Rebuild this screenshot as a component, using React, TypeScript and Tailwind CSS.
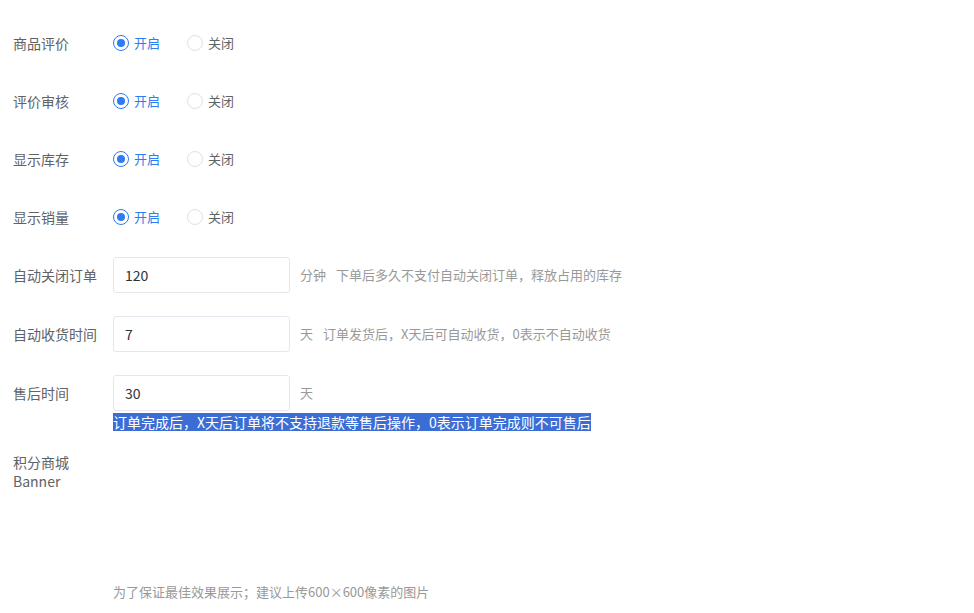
import React, { useState } from "react";

const font = { fontFamily: '"Microsoft YaHei", "Noto Sans CJK SC", "Noto Sans", sans-serif' };

interface RadioRowProps {
  label: string;
  value: boolean;
  onChange: (v: boolean) => void;
}

const Radio = ({ checked, text, onClick }: { checked: boolean; text: string; onClick: () => void }) => (
  <label className="flex items-center cursor-pointer" onClick={onClick}>
    <span
      className={
        checked
          ? "flex h-[16px] w-[16px] items-center justify-center rounded-full border border-[#2d7cf0] bg-white"
          : "flex h-[16px] w-[16px] items-center justify-center rounded-full border border-[#dcdfe6] bg-white"
      }
    >
      {checked ? <span className="h-[8px] w-[8px] rounded-full bg-[#2d7cf0]" /> : null}
    </span>
    <span className={checked ? "ml-[5px] text-[13px] text-[#2d7cf0]" : "ml-[5px] text-[13px] text-[#606266]"}>{text}</span>
  </label>
);

const RadioRow: React.FC<RadioRowProps> = ({ label, value, onChange }) => (
  <div className="mb-[22px] flex h-9 items-center">
    <div className="w-[100px] text-[14px] text-[#606266]">{label}</div>
    <div className="flex items-center gap-[27px]">
      <Radio checked={value} text="开启" onClick={() => onChange(true)} />
      <Radio checked={!value} text="关闭" onClick={() => onChange(false)} />
    </div>
  </div>
);

const InputRow = ({
  label,
  value,
  unit,
  tip,
}: {
  label: string;
  value: string;
  unit: string;
  tip?: string;
}) => (
  <div className="mb-[23px] flex h-9 items-center">
    <div className="w-[100px] text-[14px] text-[#606266]">{label}</div>
    <input
      defaultValue={value}
      className="h-9 w-[177px] rounded-[3px] border border-[#e4e7ed] px-[11px] text-[14px] text-[#303133] outline-none"
    />
    <span className="ml-[10px] text-[13px] text-[#999]">{unit}</span>
    {tip ? <span className="ml-[10px] text-[13px] text-[#999]">{tip}</span> : null}
  </div>
);

export default function App() {
  const [settings, setSettings] = useState({
    comment: true,
    review: true,
    stock: true,
    sales: true,
  });

  return (
    <div className="min-h-[613px] w-full bg-white pl-[13px] pt-[25px]" style={font}>
      <RadioRow label="商品评价" value={settings.comment} onChange={(v) => setSettings({ ...settings, comment: v })} />
      <RadioRow label="评价审核" value={settings.review} onChange={(v) => setSettings({ ...settings, review: v })} />
      <RadioRow label="显示库存" value={settings.stock} onChange={(v) => setSettings({ ...settings, stock: v })} />
      <RadioRow label="显示销量" value={settings.sales} onChange={(v) => setSettings({ ...settings, sales: v })} />

      <InputRow label="自动关闭订单" value="120" unit="分钟" tip="下单后多久不支付自动关闭订单，释放占用的库存" />
      <InputRow label="自动收货时间" value="7" unit="天" tip="订单发货后，X天后可自动收货，0表示不自动收货" />

      {/* after-sale time, description line shown selected */}
      <div className="mb-[22px]">
        <div className="flex h-9 items-center">
          <div className="w-[100px] text-[14px] text-[#606266]">售后时间</div>
          <input
            defaultValue="30"
            className="h-9 w-[177px] rounded-[3px] border border-[#e4e7ed] px-[11px] text-[14px] text-[#303133] outline-none"
          />
          <span className="ml-[10px] text-[13px] text-[#999]">天</span>
        </div>
        <div className="mt-[2px] flex pl-[100px]">
          <span className="block h-[18px] overflow-hidden whitespace-nowrap bg-[#3b6dd5] text-[14px] leading-[18px] text-white">
            订单完成后，X天后订单将不支持退款等售后操作，0表示订单完成则不可售后
          </span>
        </div>
      </div>

      <div className="flex">
        <div className="w-[100px] pr-[12px] text-[14px] leading-[19px] text-[#606266]">
          积分商城
          <br />
          Banner
        </div>
        <div>
          <div className="h-[130px] w-[148px]" />
          <div className="text-[13px] leading-[18px] text-[#999]">为了保证最佳效果展示；建议上传600×600像素的图片</div>
        </div>
      </div>
    </div>
  );
}
